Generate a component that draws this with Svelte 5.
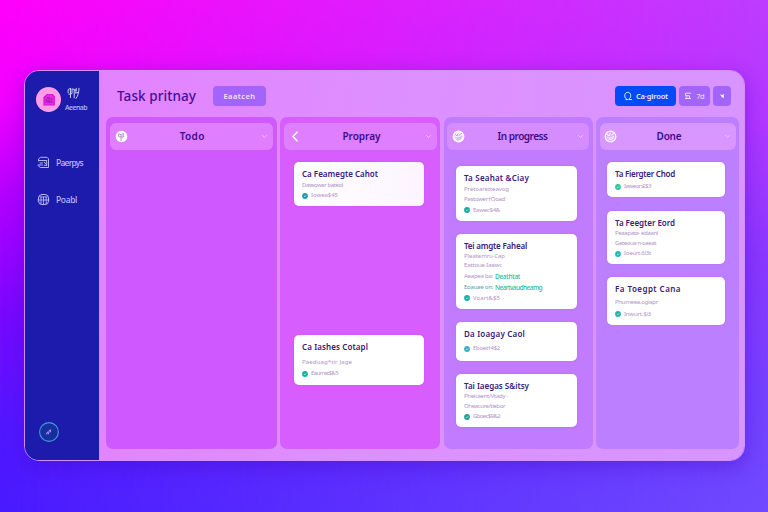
<script>
  // Spreads the letters of a label so that it fills the given width.
  function fit(node, width) {
    const natural = node.getBoundingClientRect().width;
    const count = node.textContent.length;
    node.style.letterSpacing = `${(width - natural) / count}px`;
  }

  const columns = [
    { name: 'Todo', nameWidth: 25, icon: 'leaf', kind: 'todo', cards: [] },
    {
      name: 'Propray', nameWidth: 38, icon: 'back', kind: 'prep',
      cards: [
        { gap: 12, height: 44, title: 'Ca Feamegte Cahot', width: 76, tint: true,
          lines: [{ gap: 0.5, text: 'Dateower bateol', width: 41 }],
          metaGap: 1.5, meta: 'Iowea$45', dot: '#2398b4' },
        { gap: 129, height: 49.5, title: 'Ca Iashes Cotapl', width: 66,
          lines: [{ gap: 4.5, text: 'Paeduag*tir Jage', width: 50 }],
          metaGap: 2.5, meta: 'Eaumst$&5', dot: '#12b3a0' }
      ]
    },
    {
      name: 'In progress', nameWidth: 50, icon: 'ring', kind: 'doing',
      cards: [
        { gap: 16, height: 54.5, title: 'Ta Seahat &Ciay', width: 65,
          lines: [{ gap: 1, text: 'Pretoaretteavog', width: 45 }, { gap: 0.5, text: 'Pastower†Ooad', width: 41 }],
          metaGap: 2, meta: 'Eawec$4&', dot: '#16a99c' },
        { gap: 13.5, height: 74.5, title: 'Tei amgte Faheal', width: 63,
          lines: [
            { gap: 0, text: 'Pleatemru·Cap', width: 41 },
            { gap: 0, text: 'Eattoue·Iaewc', width: 38 },
            { gap: 1.5, text: 'Aeapea ba:', width: 29, link: 'Deathtat', linkWidth: 25 },
            { gap: 2, text: 'Eoauae on:', width: 29, link: 'Neartvaudheamg', linkWidth: 47, strong: true }
          ],
          metaGap: 2, meta: 'Voart&$5', dot: '#18b0a4' },
        { gap: 13.5, height: 38.5, title: 'Da Ioagay Caol', width: 61, lines: [],
          metaGap: 4, meta: 'Eboet†4$2', dot: '#3aaec6' },
        { gap: 13.5, height: 53, title: 'Tai Iaegas S&itsy', width: 65,
          lines: [{ gap: 0, text: 'Pheicaent/Vtady -', width: 44 }, { gap: 0.5, text: 'Oheacure/tiebor', width: 41 }],
          metaGap: 1.5, meta: 'Gboec$9&2', dot: '#249f9c' }
      ]
    },
    {
      name: 'Done', nameWidth: 25, icon: 'ring', kind: 'done',
      cards: [
        { gap: 12, height: 35, title: 'Ta Fiergter Chod', width: 60, lines: [],
          metaGap: 2, meta: 'Iaweor:£$3', dot: '#35c49a' },
        { gap: 13.5, height: 53.5, title: 'Ta Feegter Eord', width: 60,
          lines: [{ gap: 0.5, text: 'Peaapata· edaanl', width: 43 }, { gap: 0.5, text: 'Geteoua n·oaeat', width: 41 }],
          metaGap: 1.5, meta: 'Ioeurt.6i3t', dot: '#24b5b5' },
        { gap: 13, height: 48, title: 'Fa Toegpt Cana', width: 66,
          lines: [{ gap: 2.5, text: 'Phumeea,ogiapr', width: 43 }],
          metaGap: 3.3, meta: 'Inwurt.$i3', dot: '#20b3ac' }
      ]
    }
  ];
</script>

<div class="stage">
  <div class="window">
    <aside>
      <div class="brand">
        <span class="avatar">
          <svg width="14" height="14" viewBox="0 0 14 14" fill="none">
            <path d="M2 4.5 5 1.5h5.5l1.7 2V12H2z" fill="#e82ae0" stroke="#cf18d2" stroke-width="1.2" />
            <path d="M4.2 10V5.5l2-1.5v6M7.8 4v5.5M9.7 5v5M4 7.5l5.5 2" stroke="#951cb4" stroke-width=".8" />
          </svg>
        </span>
        <div class="who">
          <svg width="13" height="13" viewBox="0 0 13 13" fill="none" stroke="#c9c9fa" stroke-width="1" stroke-linecap="round">
            <path d="M1.2 6V2.5l2-1M3.5 1.5v9M5 2v4.5L2 7.3M5.5 2.2h1.7v8.6M9.3 1.3l-.5 4.5M12 1.3c-.2 3.500-.5 7-3 10.2M7.5 3h2M8.8 6l2.2-.5" />
          </svg>
          <div class="user"><span use:fit={22}>Aeenab</span></div>
        </div>
      </div>

      <nav>
        <div class="item">
          <svg width="13" height="13" viewBox="0 0 13 13" fill="none" stroke="#b7b7fb" stroke-width="1" stroke-linecap="round">
            <path d="M1.5 5V3l2-1.7h6.500l1.5 1.5v8.700h-8L1.5 10M1.5 4.5h8M3 7h2.500M1 9h4.500M7 6.200 9.500 8M9.700 4.500v5M7.200 9.300h2.500" />
          </svg>
          <span use:fit={27}>Paerpys</span>
        </div>
        <div class="item">
          <svg width="13" height="13" viewBox="0 0 13 13" fill="none" stroke="#b7b7fb" stroke-width="1" stroke-linecap="round">
            <rect x="1.5" y="1.5" width="10" height="10" rx="3.5" />
            <path d="M3 4h7M1 7h11M6.5 4v7.5M4 4v7M9.2 4v7" stroke-width=".9" />
          </svg>
          <span use:fit={21}>Poabl</span>
        </div>
      </nav>

      <span class="compass">
        <svg width="22" height="22" viewBox="0 0 22 22" fill="none">
          <circle cx="11" cy="11" r="9.4" fill="#162f9c" stroke="#439ade" stroke-width="1.1" />
          <path d="m8.3 12.8 1.5-1.6M10.2 13l.7-1.5M10.8 10.2l1.7-1.2v1.8" stroke="#a78bf5" stroke-width="1.1" stroke-linecap="round" />
        </svg>
      </span>
    </aside>

    <main>
      <header>
        <h1><span use:fit={79}>Task pritnay</span></h1>
        <button class="soft filter"><span use:fit={32}>Eaatceh</span></button>
        <div class="tools">
          <button class="primary">
            <svg width="10" height="10" viewBox="0 0 10 10" fill="none" stroke="#e6f2ff" stroke-width="1" stroke-linecap="round">
              <path d="M3.4 8C1.2 6.8 1.3 3.4 2.9 1.9 4.8.7 7.7 1.5 7.7 4.6 7.7 6.2 7.1 7.4 5.9 8M3 8.6h1.5M6.2 8.6h2.3" />
            </svg>
            <span use:fit={32}>Ca·giroot</span>
          </button>
          <button class="soft view">
            <svg width="8" height="8" viewBox="0 0 8 8" fill="none" stroke="#eadbff" stroke-width="1">
              <path d="M7 1.2H1.5v2.5h4M1 6.5h6M5.5 4v2.5M1.5 5h2" />
            </svg>
            <span use:fit={8}>7d</span>
          </button>
          <button class="soft more" aria-label="More">
            <svg width="6" height="6" viewBox="0 0 6 6"><path d="m1 1.5 2.2.5L4.8 1v4L3 4.2z" fill="#fff" /></svg>
          </button>
        </div>
      </header>

      <div class="board">
        {#each columns as column}
          <section class={column.kind}>
            <div class="head">
              {#if column.icon === 'back'}
                <svg width="13" height="13" viewBox="0 0 13 13" fill="none" stroke="#fff" stroke-width="1.6" stroke-linecap="round" stroke-linejoin="round">
                  <path d="M8 2.2 4 6.5l4 4.3" />
                </svg>
              {:else if column.icon === 'leaf'}
                <svg width="13" height="13" viewBox="0 0 13 13" fill="none">
                  <circle cx="6.5" cy="6.5" r="5.8" fill="#fff" />
                  <path d="M3.5 4v2.5l2 .5M4 3.5l1.7 1.3M6 6.5V4.5l2.5-1v2L6 7v3.5M8.8 6.3 7.3 8" stroke="#b28bc9" stroke-width=".9" stroke-linecap="round" />
                </svg>
              {:else}
                <svg width="13" height="13" viewBox="0 0 13 13" fill="none">
                  <circle cx="6.5" cy="6.5" r="5.3" fill="#fff" fill-opacity={column.kind === 'done' ? 0.25 : 0.85} stroke="#fff" stroke-width="1.2" />
                  <path d="M3.2 4.2 5 6l1.2-2.5M7 5.5l2.5-2M3.5 7.5c1.5 1.2 4 .8 6-1M5 9.8c2 .3 3.5-.5 4.5-2" stroke={column.kind === 'done' ? '#fff' : '#bf90d8'} stroke-width=".9" stroke-linecap="round" />
                </svg>
              {/if}
              <h2><span use:fit={column.nameWidth}>{column.name}</span></h2>
              <svg class="chevron" width="7" height="5" viewBox="0 0 7 5" fill="none" stroke="#f0bdff" stroke-width="1" stroke-linecap="round">
                <path d="m1.5 1.5 2 1.8 2-1.8" />
              </svg>
            </div>

            {#each column.cards as card}
              <article class:tint={card.tint} style="height: {card.height}px; margin-top: {card.gap}px">
                <h3><span use:fit={card.width}>{card.title}</span></h3>
                {#each card.lines as line}
                  <p class:strong={line.strong} style="margin-top: {line.gap}px">
                    <span use:fit={line.width}>{line.text}</span>
                    {#if line.link}<b use:fit={line.linkWidth}>{line.link}</b>{/if}
                  </p>
                {/each}
                <p style="margin-top: {card.metaGap}px">
                  <svg width="6" height="6" viewBox="0 0 6 6" fill="none">
                    <circle cx="3" cy="3" r="2.9" fill={card.dot} />
                    <path d="m2 3 .8.8L4 2.3" stroke="#d5fff5" stroke-width=".7" />
                  </svg>
                  <span use:fit={27}>{card.meta}</span>
                </p>
              </article>
            {/each}
          </section>
        {/each}
      </div>
    </main>
  </div>
</div>

<style>
  :global(body) {
    overflow: hidden;
  }

  .stage {
    position: relative;
    width: 768px;
    height: 512px;
    padding: 70px 23px 51px 24px;
    box-sizing: border-box;
    background: linear-gradient(#ff00fa 0%, #f200ff 20%, #b400ff 38%, #7708ff 62%, #5018ff 84%, #4a1aff 100%);
    font-family: 'Noto Sans', 'Open Sans', sans-serif;
  }

  .stage::before {
    content: '';
    position: absolute;
    inset: 0;
    background: linear-gradient(#bd3cff 0%, #b338ff 22%, #8a38ff 50%, #7342ff 80%, #704aff 100%);
    mask-image: linear-gradient(90deg, transparent, #000);
  }

  .window {
    position: relative;
    display: flex;
    height: 100%;
    box-sizing: border-box;
    border: 1px solid #d48fff;
    border-radius: 15px;
    overflow: hidden;
    box-shadow: 0 6px 20px rgba(60, 0, 190, 0.36);
  }

  aside {
    display: flex;
    flex-direction: column;
    width: 74px;
    flex: none;
    box-sizing: border-box;
    padding: 16px 0 17px 11px;
    background: #1c1bac;
    color: #bcbcfc;
  }

  .brand {
    display: flex;
    gap: 4px;
  }

  .avatar {
    display: grid;
    place-items: center;
    width: 25px;
    height: 25px;
    border-radius: 50%;
    background: #ff9de9;
  }

  .who {
    display: flex;
    flex-direction: column;
  }

  .who svg {
    margin-left: 2px;
  }

  .user {
    height: 9px;
    margin-top: 3px;
    font-size: 7px;
    font-weight: 500;
    line-height: 9px;
    white-space: nowrap;
  }

  nav {
    display: flex;
    flex-direction: column;
    gap: 24px;
    margin-top: 43.5px;
    padding-left: 1px;
  }

  .item {
    display: flex;
    align-items: center;
    gap: 6px;
    height: 13px;
    font-size: 8.5px;
    font-weight: 500;
    white-space: nowrap;
  }

  .compass {
    display: flex;
    margin-top: auto;
    padding-left: 2px;
  }

  main {
    flex: 1;
    display: flex;
    flex-direction: column;
    min-width: 0;
    background: linear-gradient(100deg, #e382ff, #dd90ff 45%, #d795ff);
  }

  header {
    display: flex;
    align-items: center;
    height: 46px;
    padding: 4px 13px 0 18px;
    box-sizing: border-box;
  }

  h1,
  h2,
  h3,
  p {
    margin: 0;
    white-space: nowrap;
  }

  h1 {
    width: 79px;
    margin-right: 17px;
    color: #430d9b;
    font-size: 13.5px;
    font-weight: 500;
    line-height: 20px;
  }

  button {
    display: flex;
    align-items: center;
    justify-content: center;
    height: 20px;
    padding: 0;
    border: 0;
    border-radius: 4px;
    color: #f0e2ff;
    font: 600 7.5px 'Noto Sans', sans-serif;
    white-space: nowrap;
  }

  .soft {
    background: #a364fb;
  }

  .filter {
    width: 53px;
  }

  .tools {
    display: flex;
    gap: 3px;
    margin-left: auto;
  }

  .primary {
    width: 60.5px;
    gap: 3.5px;
    background: #034bf7;
  }

  .view {
    width: 31.5px;
    gap: 4px;
  }

  .view span {
    font-weight: 400;
  }

  .more {
    width: 18px;
  }

  .board {
    flex: 1;
    display: grid;
    grid-template-columns: 170.5px 160px 149px 143px;
    gap: 3.5px;
    padding: 0 0 11px 7px;
  }

  section {
    padding: 5.5px 3.5px 0;
    border-radius: 7px;
  }

  .todo {
    background: #cf58ff;
  }

  .prep {
    background: #d75dff;
  }

  .doing {
    background: #c07bff;
  }

  .done {
    background: #bb7fff;
  }

  .head {
    display: flex;
    align-items: center;
    height: 27.5px;
    padding: 0 5px;
    border-radius: 6px;
    background: #df7eff;
  }

  .doing .head {
    background: #d58cff;
  }

  .done .head {
    padding-left: 4px;
    background: #d896ff;
  }

  h2 {
    flex: 1;
    color: #3d0b8c;
    font-size: 10px;
    font-weight: 600;
    line-height: 14px;
    text-align: center;
  }

  .todo h2 {
    padding-right: 4px;
  }

  .prep h2 {
    padding-right: 3px;
  }

  .doing h2 {
    padding-left: 3px;
  }

  .done h2 {
    padding-right: 2px;
  }

  article {
    box-sizing: border-box;
    margin-left: 9px;
    padding: 6px 0 0 8px;
    border-radius: 5px;
    background: #fff;
    box-shadow: 0 0 2px rgba(190, 60, 255, 0.35);
  }

  .prep article {
    width: 129.5px;
    margin-left: 10.5px;
  }

  .doing article {
    width: 121px;
  }

  .done article {
    width: 118px;
    margin-left: 7.5px;
  }

  .tint {
    background: linear-gradient(90deg, #fff, #fcf4ff);
  }

  h3 {
    height: 12px;
    color: #3a2079;
    font-size: 8px;
    font-weight: 600;
    line-height: 12px;
  }

  p {
    display: flex;
    align-items: center;
    gap: 3px;
    height: 9px;
    color: #b094c8;
    font-size: 6px;
    line-height: 9px;
  }

  p b {
    margin-left: -1px;
    color: #25bda6;
    font-size: 6.5px;
    font-weight: 500;
  }

  p.strong {
    color: #4da6ad;
  }
</style>
